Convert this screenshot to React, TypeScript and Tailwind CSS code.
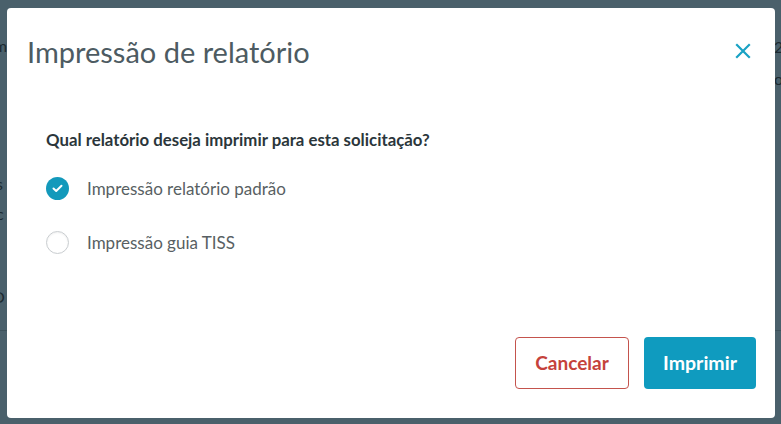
import React from "react";

export default function App() {
  return (
    <div
      className="relative w-[781px] h-[424px] overflow-hidden bg-[#4a606b]"
      style={{ fontFamily: "Lato, 'Noto Sans', sans-serif" }}
    >
      {/* page behind the overlay */}
      <div className="absolute inset-0 text-[#1c2a31] text-[16px]">
        <div className="absolute left-[-6px] top-[34px]">mí</div>
        <div className="absolute left-[-4px] top-[172px]">s</div>
        <div className="absolute left-[-4px] top-[202px]">c</div>
        <div className="absolute left-[-8px] top-[285px]">O</div>
        <div className="absolute left-0 right-0 top-[330px] h-px bg-[#3d525c]" />
        <div className="absolute left-[774px] top-[35px]">2</div>
        <div className="absolute left-[774px] top-[67px]">o</div>
      </div>

      {/* modal */}
      <div className="absolute left-[7px] top-[8px] w-[768px] h-[410px] bg-white rounded-[4px] flex flex-col">
        <div className="flex items-center justify-between pl-[20px] pr-[24px] pt-[27px]">
          <h1 className="text-[29px] leading-[34px] font-normal text-[#4d5b62]">
            Impressão de relatório
          </h1>
          <svg width="16" height="16" viewBox="0 0 16 16" className="mt-[-2px]">
            <path d="M2 2 L14 14 M14 2 L2 14" stroke="#19a2c4" strokeWidth="2.2" strokeLinecap="square" />
          </svg>
        </div>

        <div className="pl-[39px] pt-[61px]">
          <p className="text-[16.8px] leading-[20px] font-bold text-[#2b363b]">
            Qual relatório deseja imprimir para esta solicitação?
          </p>
          <div className="flex flex-col gap-[31px] mt-[27px]">
            <div className="flex items-center gap-[18px]">
              <div className="w-[23px] h-[23px] rounded-full bg-[#1399bb] flex items-center justify-center">
                <svg width="11" height="9" viewBox="0 0 11 9">
                  <path d="M1.5 4.5 L4.2 7 L9.5 1.8" stroke="white" strokeWidth="2" fill="none" strokeLinecap="round" strokeLinejoin="round" />
                </svg>
              </div>
              <span className="text-[17px] leading-[22px] text-[#585f63]">Impressão relatório padrão</span>
            </div>
            <div className="flex items-center gap-[18px]">
              <div className="w-[23px] h-[23px] rounded-full border border-[#c9cdd0] bg-white shadow-[inset_0_1px_2px_rgba(0,0,0,0.06)]" />
              <span className="text-[17px] leading-[22px] text-[#585f63]">Impressão guia TISS</span>
            </div>
          </div>
        </div>

        <div className="mt-auto flex justify-end gap-[15px] pr-[19px] pb-[29px]">
          <button className="w-[114px] h-[52px] rounded-[4px] border border-[#c4534d] text-[#c5423b] text-[19px] font-bold bg-white">
            Cancelar
          </button>
          <button className="w-[112px] h-[52px] rounded-[4px] bg-[#0f9bbf] text-white text-[19.5px] font-bold">
            Imprimir
          </button>
        </div>
      </div>
    </div>
  );
}
